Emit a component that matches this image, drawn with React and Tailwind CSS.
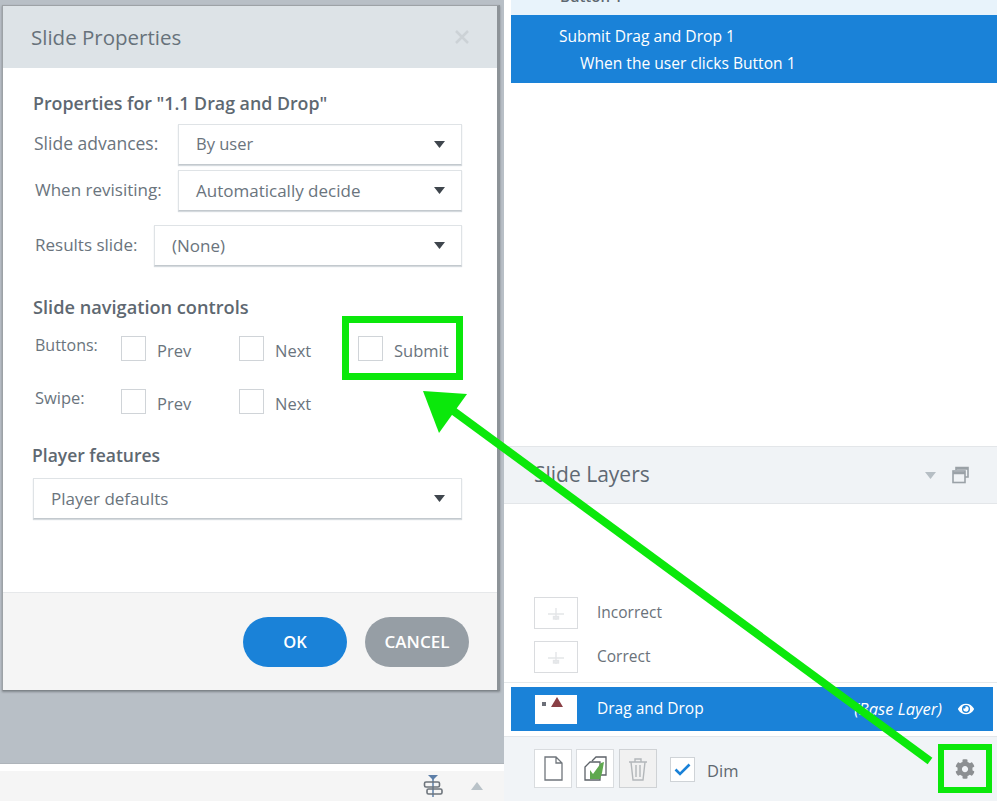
import React from "react";
import { FaCog, FaEye } from "react-icons/fa";

const Caret = ({ className = "", color = "#3f464d" }) => (
  <svg width="11" height="7" viewBox="0 0 11 7" className={className}><path d="M0 0H11L5.5 7Z" fill={color} /></svg>
);

const Select = ({ value, widthClass, sizeClass }) => (
  <div className={`${widthClass} ${sizeClass} pl-[17px] h-[41px] shrink-0 flex items-center justify-between pr-[16px] bg-white border border-[#dfe3e6] border-b-[#c3c9ce] shadow-[0_1px_1px_#d5dade] text-[#6a747d]`}>
    <span>{value}</span>
    <Caret />
  </div>
);

const Check = ({ label }) => (
  <div className="flex items-start">
    <div className="w-[25px] h-[25px] border border-[#d0d4d8] bg-white" />
    <span className="ml-[11px] mt-[3px] text-[16.5px] leading-[24px] text-[#6a747d]">{label}</span>
  </div>
);

const Divider = () => (
  <svg width="42" height="30" viewBox="0 0 42 30">
    <g stroke="#e4e6e8" strokeWidth="1.4" fill="none">
      <path d="M13 16H29M21 10V22" />
      <rect x="18.5" y="18.5" width="5" height="2.5" fill="#e8eaec" />
    </g>
  </svg>
);

export default function App() {
  return (
    <div className="relative flex w-[999px] h-[801px] overflow-hidden bg-white font-['Open_Sans','Noto_Sans',sans-serif]">
      {/* left column */}
      <div className="w-[504px] h-full flex flex-col bg-[#b8bfc6]">
        <div className="flex-1 pt-[5px] pl-[2px]">
          <div className="w-[498px] h-[686px] flex flex-col bg-white border border-[#9da2a6] border-r-[3px] border-r-[#8d9398] border-b-[#7f858a] shadow-[0_1px_2px_#80868c]">
            <div className="h-[62px] shrink-0 bg-[#dde3e7] flex items-center justify-between pl-[28px] pr-[28px]">
              <span className="text-[20.5px] mt-[1px] text-[#67727b]">Slide Properties</span>
              <svg width="14" height="14" viewBox="0 0 14 14"><path d="M1 1L13 13M13 1L1 13" stroke="#ccd2d6" strokeWidth="2.5" /></svg>
            </div>
            <div className="flex-1 pl-[30px] pr-[35px] pt-[25px]">
              <div className="h-[20px] flex items-center whitespace-nowrap text-[17.8px] font-semibold text-[#5e6871]">Properties for "1.1 Drag and Drop"</div>
              <div className="mt-[11px] flex items-center">
                <span className="w-[145px] pl-[1px] -mt-[2px] text-[17.5px] text-[#6a747d]">Slide advances:</span>
                <Select value="By user" widthClass="w-[284px]" sizeClass="text-[16.5px]" />
              </div>
              <div className="mt-[5px] flex items-center">
                <span className="w-[145px] pl-[2px] -mt-[2px] text-[17px] text-[#6a747d]">When revisiting:</span>
                <Select value="Automatically decide" widthClass="w-[284px]" sizeClass="text-[17px]" />
              </div>
              <div className="mt-[14px] flex items-center">
                <span className="w-[121px] pl-[2px] -mt-[2px] text-[17px] text-[#6a747d]">Results slide:</span>
                <Select value="(None)" widthClass="w-[308px]" sizeClass="text-[17px]" />
              </div>
              <div className="mt-[31px] h-[20px] flex items-center whitespace-nowrap text-[18.2px] font-semibold text-[#5e6871] pt-[2px]">Slide navigation controls</div>
              <div className="mt-[19px] h-[24px] flex items-start">
                <span className="w-[88px] pl-[2px] -mt-[3px] text-[16px] text-[#6a747d]">Buttons:</span>
                <div className="w-[118px]"><Check label="Prev" /></div>
                <div className="w-[119px]"><Check label="Next" /></div>
                <Check label="Submit" />
              </div>
              <div className="mt-[29px] h-[24px] flex items-start">
                <span className="w-[88px] pl-[2px] -mt-[3px] text-[16.5px] text-[#6a747d]">Swipe:</span>
                <div className="w-[118px]"><Check label="Prev" /></div>
                <div className="w-[119px]"><Check label="Next" /></div>
              </div>
              <div className="mt-[32px] -ml-[1px] h-[20px] flex items-center whitespace-nowrap text-[17.5px] font-semibold text-[#5e6871]">Player features</div>
              <div className="mt-[13px]">
                <Select value="Player defaults" widthClass="w-[429px]" sizeClass="text-[17px]" />
              </div>
            </div>
            <div className="h-[98px] shrink-0 bg-[#f5f5f5] border-t border-[#e6e8ea] flex justify-end items-start pt-[24px] pr-[28px] gap-[18px]">
              <button className="w-[104px] h-[50px] rounded-full bg-[#1a82d8] text-white text-[16.5px] font-semibold">OK</button>
              <button className="w-[104px] h-[50px] rounded-full bg-[#969ea5] text-white text-[17px] font-semibold">CANCEL</button>
            </div>
          </div>
        </div>
        <div className="h-[38px] shrink-0 border-t border-[#aeb4ba]">
          <div className="h-[7px] bg-white" />
          <div className="h-[30px] bg-[#f5f5f5] flex items-center justify-end pr-[21px] gap-[28px]">
            <svg width="20" height="24" viewBox="0 0 20 24">
              <path d="M5 1H15L10 6Z" fill="#5d7fa8" />
              <path d="M10 4V23" stroke="#5d7fa8" strokeWidth="1.5" />
              <rect x="1.5" y="8" width="15" height="5" rx="1.5" fill="none" stroke="#6d747b" strokeWidth="1.6" />
              <rect x="4" y="15" width="15" height="5" rx="1.5" fill="none" stroke="#6d747b" strokeWidth="1.6" />
            </svg>
            <svg width="12" height="8" viewBox="0 0 12 8"><path d="M6 0L12 8H0Z" fill="#b9c2c8" /></svg>
          </div>
        </div>
      </div>

      {/* right column */}
      <div className="flex-1 h-full flex flex-col bg-white">
        <div className="ml-[7px] mr-[2px] h-[15px] bg-[#e8f3fb] overflow-hidden text-[15px] font-semibold text-[#5e6871]">
          <div className="pl-[49px] -mt-[15px] leading-[22px]">Button 1</div>
        </div>
        <div className="ml-[7px] mr-[2px] h-[68px] bg-[#1a82d8] text-white text-[15.6px] leading-[27px] pt-[8px] pl-[48px]">
          <div>Submit Drag and Drop 1</div>
          <div className="pl-[21px]">When the user clicks Button 1</div>
        </div>
        <div className="h-[363px]" />
        <div className="h-[58px] mr-[2px] shrink-0 bg-[#f0f3f6] border-t border-b border-[#e3e6e9] flex items-center justify-between pl-[30px] pr-[28px]">
          <span className="text-[21px] text-[#5f6973]">Slide Layers</span>
          <div className="flex items-center gap-[16px]">
            <Caret color="#b6bec4" />
            <svg width="17" height="18" viewBox="0 0 17 18" fill="none">
              <path d="M4 4V1.5H16V11H13" stroke="#9aa1a7" strokeWidth="1.6" />
              <rect x="1" y="5" width="12" height="11.5" stroke="#9aa1a7" strokeWidth="1.6" />
              <path d="M1 7H13M4 2.5H16" stroke="#9aa1a7" strokeWidth="2.5" />
            </svg>
          </div>
        </div>
        <div className="flex-1 bg-white pt-[93px]">
          <div className="flex items-center h-[32px] pl-[30px]">
            <div className="w-[44px] h-[32px] border border-[#dadcdf] flex items-center justify-center"><Divider /></div>
            <span className="ml-[19px] text-[15.5px] text-[#6a727a]">Incorrect</span>
          </div>
          <div className="mt-[12px] flex items-center h-[32px] pl-[30px]">
            <div className="w-[44px] h-[32px] border border-[#dadcdf] flex items-center justify-center"><Divider /></div>
            <span className="ml-[19px] text-[15.5px] text-[#6a727a]">Correct</span>
          </div>
          <div className="mt-[9px] mr-[2px] border-t border-[#e6e9eb]" />
          <div className="mt-[4px] ml-[7px] mr-[6px] h-[44px] bg-[#1a82d8] flex items-center pl-[24px] pr-[19px] text-white text-[15.5px]">
            <div className="w-[42px] h-[29px] bg-white">
              <svg width="42" height="29" viewBox="0 0 42 29">
                <rect x="7" y="7" width="4" height="4" fill="#6c6f78" />
                <path d="M22 2L28 12H16Z" fill="#8a4046" />
              </svg>
            </div>
            <span className="ml-[20px]">Drag and Drop</span>
            <span className="ml-auto italic text-[16.5px]">(Base Layer)</span>
            <FaEye className="ml-[16px] text-white" size={16} />
          </div>
        </div>
        <div className="h-[65px] mr-[2px] shrink-0 bg-[#f1f4f7] border-t border-[#e3e6e9] flex items-start pl-[30px] pt-[12px]">
          <div className="w-[38px] h-[39px] bg-white border border-[#d9dcdf] flex items-center justify-center">
            <svg width="19" height="25" viewBox="0 0 19 25" fill="none"><path d="M1 1H12L18 7V24H1Z M12 1V7H18" stroke="#70767c" strokeWidth="1.3" /></svg>
          </div>
          <div className="ml-[4px] w-[38px] h-[39px] bg-white border border-[#d9dcdf] flex items-center justify-center">
            <svg width="24" height="25" viewBox="0 0 24 25" fill="none">
              <path d="M9 5L13 1H23V19H16" stroke="#5c6268" strokeWidth="1.3" />
              <path d="M2 11L7 6H17V24H2Z" fill="#fff" stroke="#5c6268" strokeWidth="1.3" />
              <path d="M7 14L10 18L18 7L21 6L19 17L17 23H7Z" fill="#5fa84f" />
            </svg>
          </div>
          <div className="ml-[5px] w-[38px] h-[39px] bg-[#f1f1f1] border border-[#cfd2d5] flex items-center justify-center">
            <svg width="20" height="24" viewBox="0 0 20 24" fill="none" stroke="#b3b7ba" strokeWidth="1.4">
              <path d="M1 5H19M7 5V2H13V5M3 5L5 23H15L17 5M8 8V20M12 8V20" />
            </svg>
          </div>
          <div className="ml-[13px] mt-[8px] w-[25px] h-[25px] bg-white border border-[#cfd3d7] flex items-center justify-center">
            <svg width="17" height="13" viewBox="0 0 17 13" fill="none"><path d="M1.5 6.5L6 11L15.5 1.5" stroke="#1a82d8" strokeWidth="2.6" /></svg>
          </div>
          <span className="ml-[12px] mt-[10px] text-[16.5px] leading-[24px] text-[#5f6870]">Dim</span>
          <div className="ml-auto mr-[22px] mt-[10px] text-[#8c8f92]"><FaCog size={20} /></div>
        </div>
      </div>

      {/* annotation overlay */}
      <div className="absolute left-[342px] top-[316px] w-[121px] h-[64px] border-[7px] border-[#0be80b]" />
      <div className="absolute left-[938px] top-[744px] w-[54px] h-[49px] border-[6px] border-[#0be80b]" />
      <svg className="absolute left-0 top-0 pointer-events-none" width="999" height="801" viewBox="0 0 999 801">
        <path d="M930 761L448 407" stroke="#0be80b" strokeWidth="8" fill="none" />
        <path d="M423 391L467 394L439 433Z" fill="#0be80b" />
      </svg>
    </div>
  );
}
